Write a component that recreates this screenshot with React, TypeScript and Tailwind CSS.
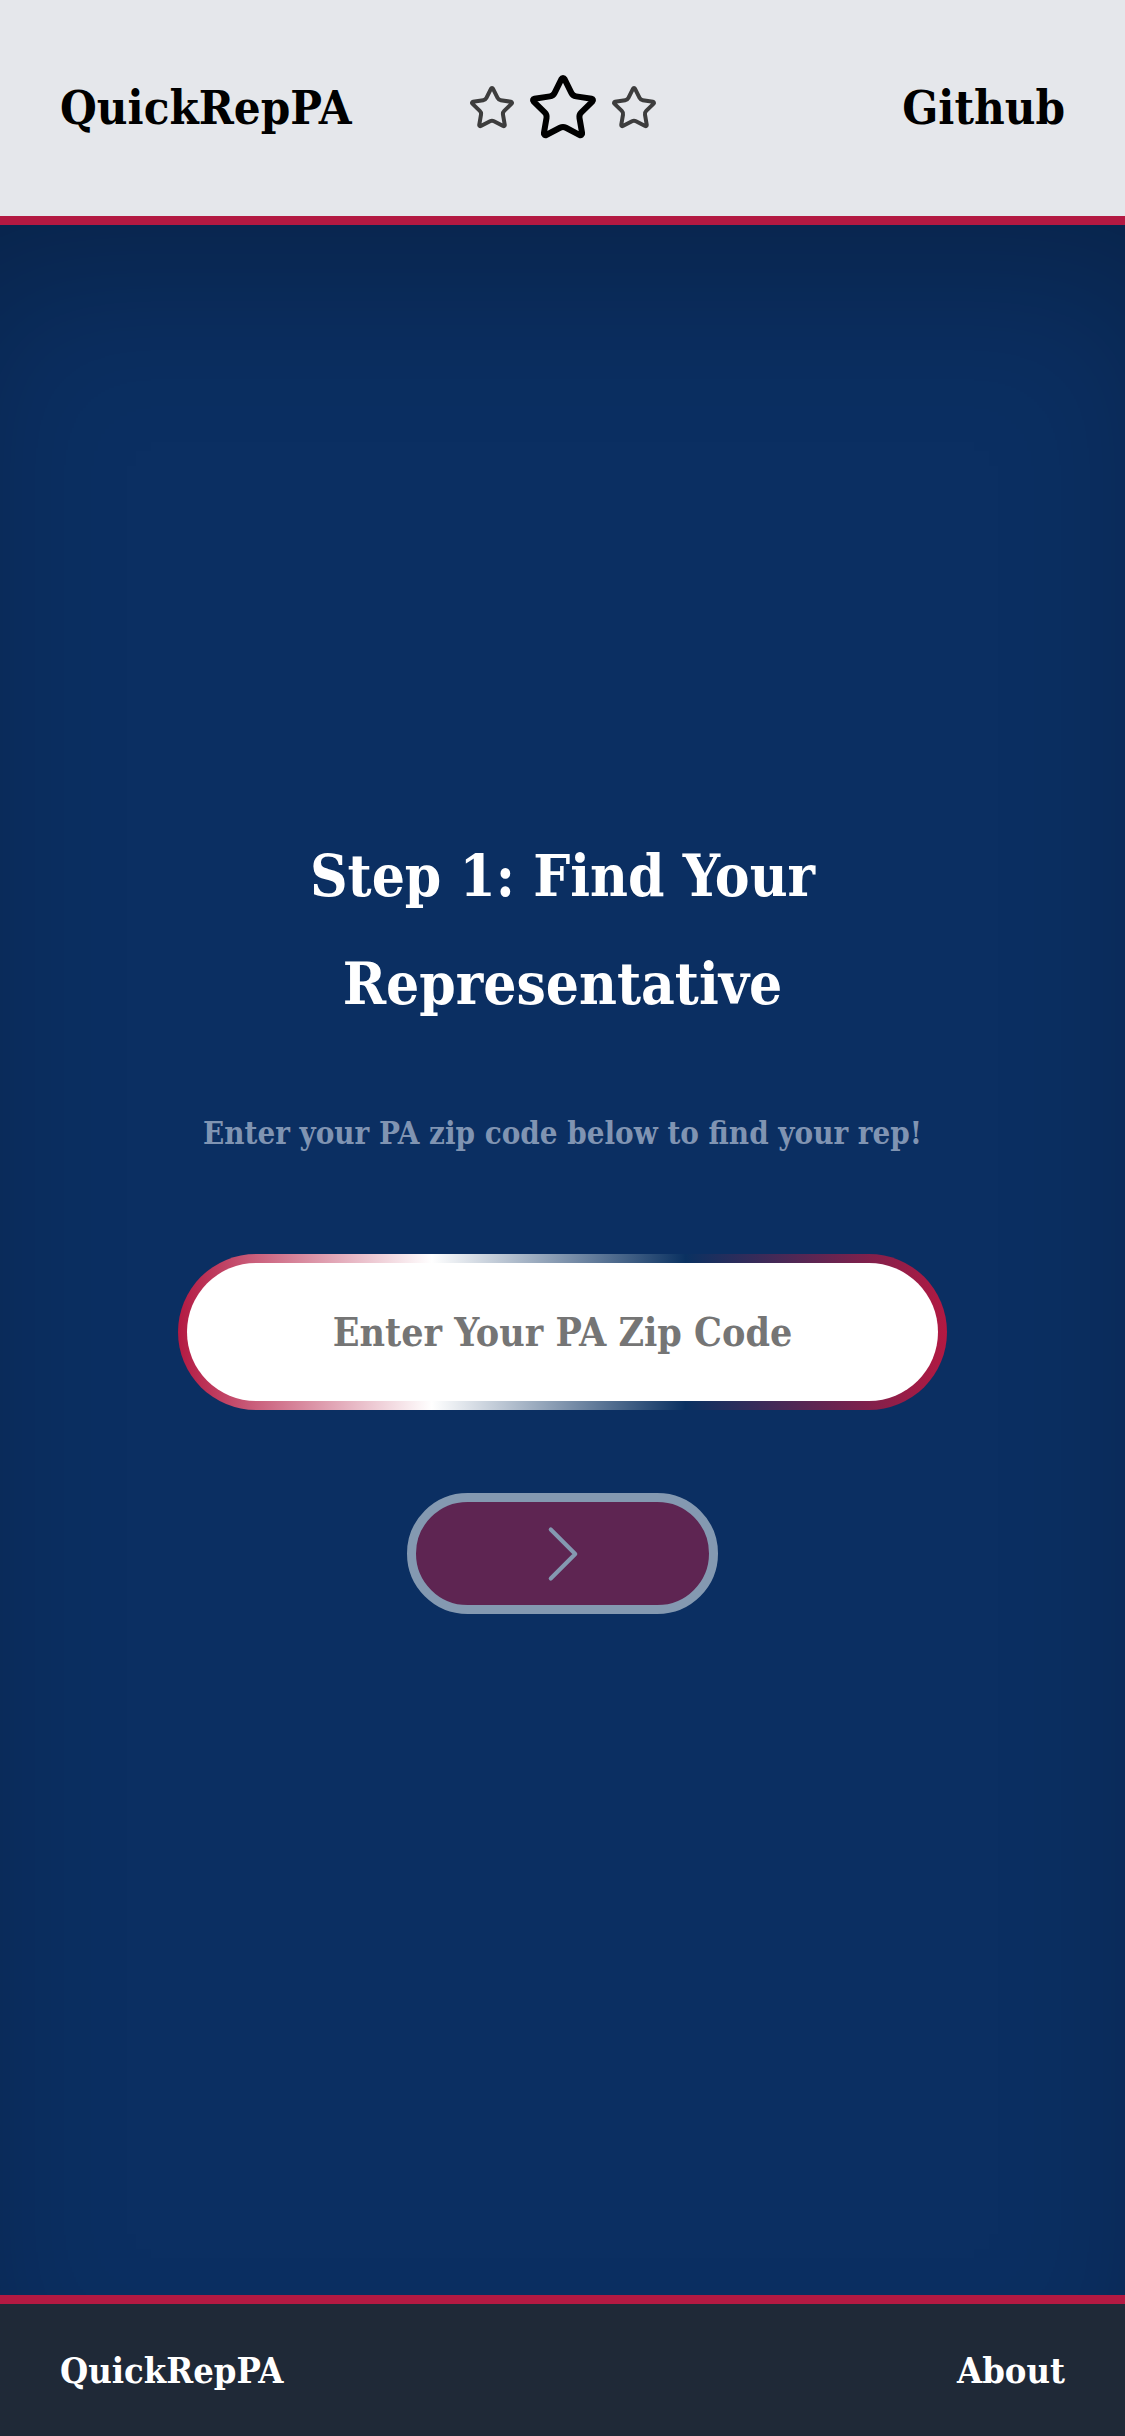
import { Star, ChevronRight } from "lucide-react";

const serif = "font-['DejaVu_Serif_Condensed','DejaVu_Serif',serif]";

function Header() {
  return (
    <header className="grid h-[225px] grid-cols-[1fr_auto_1fr] items-center border-b-[9px] border-[#b31942] bg-[#e5e7eb] px-[60px]">
      <span className={`${serif} text-[47px] font-bold text-black`}>QuickRepPA</span>
      <div className="flex items-center gap-[11px]">
        <Star size={48} strokeWidth={2} className="text-[#3d3d3d]" />
        <Star size={72} strokeWidth={2} className="text-black" />
        <Star size={48} strokeWidth={2} className="text-[#3d3d3d]" />
      </div>
      <span className={`${serif} justify-self-end text-[47px] font-bold text-black`}>Github</span>
    </header>
  );
}

function ZipForm() {
  return (
    <div className="flex flex-col items-center">
      <input
        type="text"
        placeholder="Enter Your PA Zip Code"
        className={`${serif} h-[156px] w-[769px] rounded-full border-[9px] border-transparent text-center text-[39px] font-bold text-[#757575] placeholder:text-[#757575] outline-none [background:linear-gradient(white,white)_padding-box,linear-gradient(to_right,#b31942,#ffffff_33%,#0a3161_66%,#b31942)_border-box]`}
      />
      <button className="mt-[83px] flex h-[121px] w-[311px] items-center justify-center rounded-full border-[9px] border-[#8499b1] bg-[#5e2552]">
        <ChevronRight size={98} strokeWidth={1} className="text-[#8499b1]" />
      </button>
    </div>
  );
}

export default function App() {
  return (
    <div className="flex min-h-[2436px] flex-col">
      <Header />
      <main className="flex h-[2070px] flex-col items-center bg-[#0b2f62] pt-[597px] shadow-[inset_0_90px_160px_-40px_rgba(0,0,0,0.25)]">
        <h1 className={`${serif} text-center text-[58px] font-bold leading-[108px] text-white`}>
          Step 1: Find Your
          <br />
          Representative
        </h1>
        <p className={`${serif} mt-[71px] text-[31px] font-bold leading-[48px] text-[#8094b2]`}>
          Enter your PA zip code below to find your rep!
        </p>
        <div className="mt-[97px]">
          <ZipForm />
        </div>
      </main>
      <footer className="flex h-[141px] items-center justify-between border-t-[9px] border-[#b31942] bg-[#1f2937] px-[60px]">
        <span className={`${serif} text-[36px] font-bold text-white`}>QuickRepPA</span>
        <span className={`${serif} text-[36px] font-bold text-white`}>About</span>
      </footer>
    </div>
  );
}
